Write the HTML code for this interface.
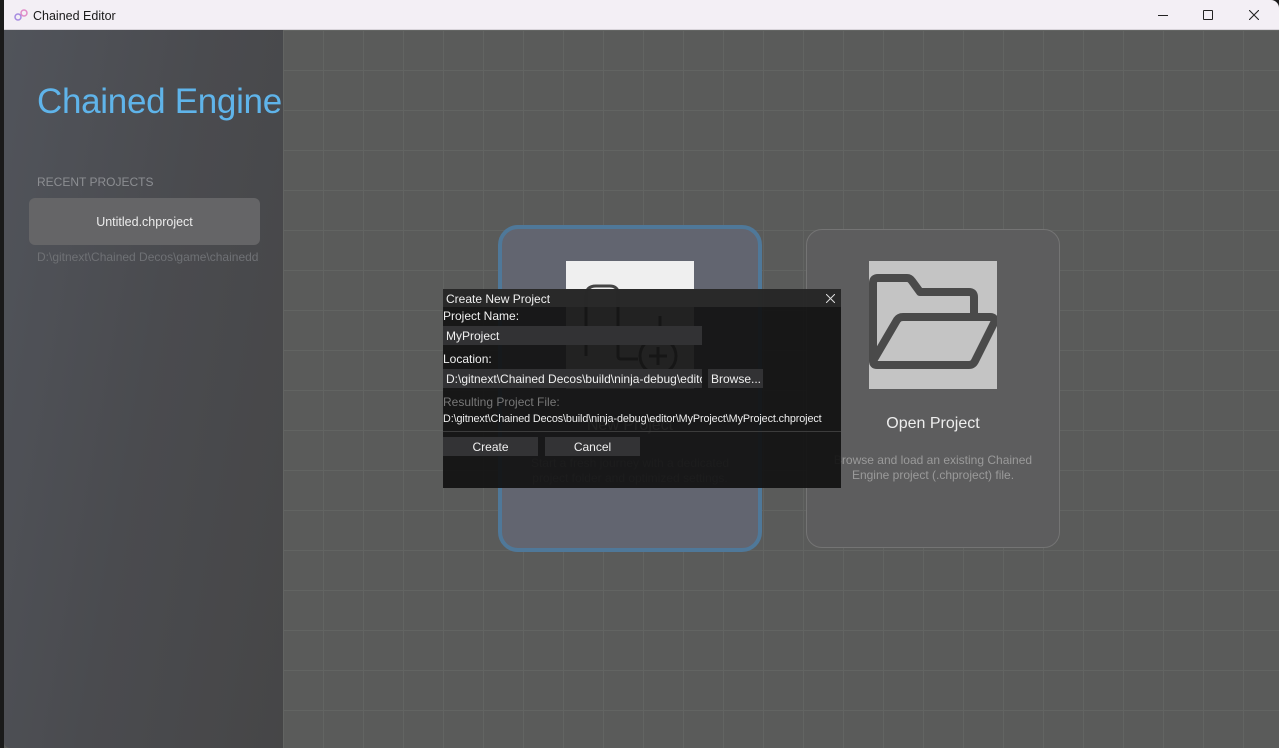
<!DOCTYPE html>
<html><head><style>
*{margin:0;padding:0;box-sizing:border-box}
body{width:1279px;height:748px;overflow:hidden;background:#1c1c1c;font-family:"Liberation Sans","DejaVu Sans",sans-serif;position:relative}
.abs{position:absolute}
#title{left:4px;top:0;width:1275px;height:30px;background:#f3eff5;border-bottom:1px solid #d8d4da;border-top-right-radius:8px}
#main{left:4px;top:30px;width:1275px;height:718px;background-color:#5a5b5a;
background-image:linear-gradient(#626462 1px,transparent 1px),linear-gradient(90deg,#626462 1px,transparent 1px);
background-size:40px 40px;background-position:-1px 40px,-1px 0}
#side{left:4px;top:30px;width:279px;height:718px;overflow:hidden;background:linear-gradient(100deg,#51545b 0%,#4a4b4f 50%,#464647 100%);border-bottom-left-radius:6px}
.dlgtxt{color:#f0f0f0;font-size:12px}
</style></head><body>
<div class="abs" style="left:0;top:30px;width:4px;height:718px;background:#1a1a1a"></div>
<div class="abs" id="title">
 <svg class="abs" style="left:10px;top:8px" width="14" height="14" viewBox="0 0 14 14"><circle cx="4" cy="9" r="3" fill="none" stroke="#a58be0" stroke-width="1.5"/><circle cx="10" cy="5" r="3" fill="none" stroke="#e08bc8" stroke-width="1.5"/></svg>
 <div class="abs" style="left:29px;top:9px;font-size:12.5px;color:#1a1a1a">Chained Editor</div>
 <div class="abs" style="left:1154px;top:15px;width:10px;height:1px;background:#222"></div>
 <div class="abs" style="left:1199px;top:10px;width:10px;height:10px;border:1px solid #222;border-radius:1px"></div>
 <svg class="abs" style="left:1245px;top:10px" width="10" height="10"><path d="M0 0L10 10M10 0L0 10" stroke="#222" stroke-width="1.1"/></svg>
</div>
<div class="abs" id="main"></div>
<div class="abs" id="side">
 <div class="abs" style="left:33px;top:52px;font-size:35px;color:#5fb4ea;white-space:nowrap;letter-spacing:-0.3px">Chained Engine</div>
 <div class="abs" style="left:33px;top:145px;font-size:12px;color:#8c8e92">RECENT PROJECTS</div>
 <div class="abs" style="left:25px;top:168px;width:231px;height:47px;background:#656567;border-radius:6px;color:#ececec;font-size:12.5px;text-align:center;line-height:49px">Untitled.chproject</div>
 <div class="abs" style="left:33px;top:220px;font-size:12px;color:#6f7175;white-space:nowrap;width:222px;overflow:hidden">D:\gitnext\Chained Decos\game\chaineddecos</div>
</div>
<!-- new project card -->
<div class="abs" style="left:498px;top:225px;width:264px;height:327px;border:4px solid #4f7899;border-radius:20px;background:#626570">
 <div class="abs" style="left:64px;top:32px;width:128px;height:128px;background:#efefef">
  <svg width="128" height="128" viewBox="0 0 128 128"><path d="M20 95V35Q20 25 30 25H44Q50 25 52 30V95Q52 98 55 98H72M94 80V55" fill="none" stroke="#444" stroke-width="3"/><circle cx="92" cy="95" r="18" fill="none" stroke="#444" stroke-width="3"/><path d="M92 86V104M83 95H101" stroke="#444" stroke-width="3"/></svg>
 </div>
 <div class="abs" style="left:0;top:188px;width:256px;text-align:center;color:#eee;font-size:16px">New Project</div>
 <div class="abs" style="left:20px;top:227px;width:216px;text-align:center;color:#9a9ca3;font-size:12px;line-height:15px">Start a fresh journey with a dedicated project folder and optimized settings.</div>
</div>
<!-- open project card -->
<div class="abs" style="left:806px;top:229px;width:254px;height:319px;border:1px solid #747474;border-radius:16px;background:#5d5d5e">
 <div class="abs" style="left:62px;top:31px;width:128px;height:128px;background:#c4c4c4">
  <svg width="128" height="128" viewBox="0 0 128 128"><path d="M4 100V22Q4 17 9 17H38Q41 17 43 20L51 31H100Q105 31 105 36V56M4 100L28 59Q30 56 34 56H121Q127 56 125 62L106 100Q104 104 100 104H8Q4 104 4 100Z" fill="none" stroke="#4a4a4a" stroke-width="8" stroke-linejoin="round"/></svg>
 </div>
 <div class="abs" style="left:0;top:185px;width:252px;text-align:center;color:#eee;font-size:16px">Open Project</div>
 <div class="abs" style="left:20px;top:223px;width:212px;text-align:center;color:#9a9a9a;font-size:12px;line-height:15px">Browse and load an existing Chained Engine project (.chproject) file.</div>
</div>
<!-- dialog -->
<div class="abs" style="left:443px;top:289px;width:398px;height:199px;background:rgba(18,18,18,0.93)">
 <div class="abs" style="left:0;top:0;width:398px;height:18px;background:rgba(42,42,42,0.96)"></div>
 <div class="abs dlgtxt" style="left:3px;top:3px">Create New Project</div>
 <svg class="abs" style="left:383px;top:5px" width="9" height="9"><path d="M0 0L9 9M9 0L0 9" stroke="#ddd" stroke-width="1"/></svg>
 <div class="abs dlgtxt" style="left:0;top:20px">Project Name:</div>
 <div class="abs" style="left:0;top:37px;width:259px;height:19px;background:#323234"></div>
 <div class="abs dlgtxt" style="left:3px;top:40px">MyProject</div>
 <div class="abs dlgtxt" style="left:0;top:63px">Location:</div>
 <div class="abs" style="left:0;top:80px;width:259px;height:19px;background:#323234;overflow:hidden"><div class="dlgtxt" style="padding:3px 3px;white-space:nowrap">D:\gitnext\Chained Decos\build\ninja-debug\editor</div></div>
 <div class="abs" style="left:265px;top:80px;width:55px;height:19px;background:#323234"></div>
 <div class="abs dlgtxt" style="left:268px;top:83px">Browse...</div>
 <div class="abs" style="left:0;top:106px;font-size:12px;color:#777">Resulting Project File:</div>
 <div class="abs" style="left:0;top:124px;font-size:10.8px;color:#eee;white-space:nowrap;letter-spacing:-0.1px">D:\gitnext\Chained Decos\build\ninja-debug\editor\MyProject\MyProject.chproject</div>
 <div class="abs" style="left:0;top:142px;width:398px;height:1px;background:#3c3c3c"></div>
 <div class="abs dlgtxt" style="left:0;top:148px;width:95px;height:19px;background:#333335;text-align:center;line-height:21px">Create</div>
 <div class="abs dlgtxt" style="left:102px;top:148px;width:95px;height:19px;background:#333335;text-align:center;line-height:21px">Cancel</div>
</div>
</body></html>
